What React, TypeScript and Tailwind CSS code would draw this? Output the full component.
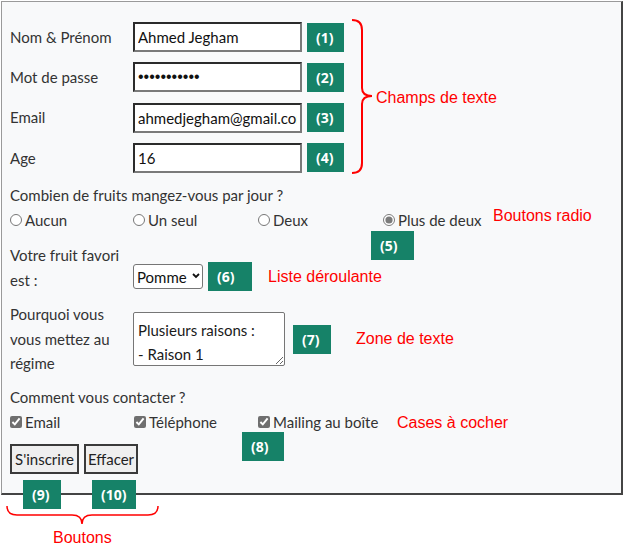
const labelFont = { fontFamily: "Lato, 'Open Sans', sans-serif" };

function Badge({ n, w }: { n: string; w: string }) {
  return (
    <div
      className={`${w} h-[29px] bg-[#168268] text-white text-[14px] font-bold flex items-center pl-[9px] font-['Open_Sans',sans-serif]`}
    >
      ({n})
    </div>
  );
}

function Note({ children, className = "" }: { children: React.ReactNode; className?: string }) {
  return (
    <span className={`text-[16px] text-[#ff0000] font-['Liberation_Sans',Arial,sans-serif] whitespace-nowrap ${className}`}>
      {children}
    </span>
  );
}

const inputCls =
  "w-[169px] h-[30px] border-2 border-[#7a7a7a] border-t-[#2b2b2b] border-l-[#2b2b2b] bg-white px-[3px] text-[15px] text-[#111] outline-none";

export default function App() {
  return (
    <div className="relative w-[624px] h-[546px] bg-white pt-px pl-px text-[15px] text-[#333]" style={labelFont}>
      {/* Form panel */}
      <div className="w-[622px] h-[494px] bg-[#f8f9fa] border-t border-l border-[#9a9a9a] border-r-2 border-b-2 border-r-[#444] border-b-[#444] pl-[8px] pt-[20px]">
        <div className="flex flex-col gap-[10.3px]">
          {[
            { label: "Nom & Prénom", type: "text", value: "Ahmed Jegham", n: "1" },
            { label: "Mot de passe", type: "password", value: "ahmedjegham", n: "2" },
            { label: "Email", type: "text", value: "ahmedjegham@gmail.com", n: "3" },
            { label: "Age", type: "text", value: "16", n: "4" },
          ].map((r) => (
            <div key={r.n} className="flex items-center h-[30px]">
              <label className="w-[123px]">{r.label}</label>
              <input
                className={inputCls}
                type={r.type}
                defaultValue={r.value}
                style={
                  r.type === "password"
                    ? { fontFamily: "'Liberation Sans', Arial, sans-serif", fontSize: "16px" }
                    : labelFont
                }
              />
              <div className="ml-[5px]">
                <Badge n={r.n} w="w-[37px]" />
              </div>
            </div>
          ))}
        </div>

        <div className="mt-[10px] leading-[25px]">Combien de fruits mangez-vous par jour ?</div>
        <div className="grid grid-cols-[123px_125px_125px_110px_auto] items-center leading-[25px]">
          {["Aucun", "Un seul", "Deux", "Plus de deux"].map((o) => (
            <label key={o} className="flex items-center gap-[3px]">
              <input
                type="radio"
                name="fruits"
                defaultChecked={o === "Plus de deux"}
                className="w-[12px] h-[12px] accent-[#7b7b7b]"
              />
              {o}
            </label>
          ))}
          <Note className="-mt-[10px]">Boutons radio</Note>
        </div>

        <div className="flex items-end mt-[10px]">
          <div className="w-[123px] leading-[25px]">
            Votre fruit favori
            <br />
            est :
          </div>
          <div className="flex items-center h-[29px] mb-[1.5px]">
            <div className="relative">
              <select
                className="appearance-none w-[70px] h-[25px] border border-[#767676] rounded-[3px] bg-white pl-[3px] text-[15px] text-[#111]"
                style={labelFont}
                defaultValue="Pomme"
              >
                <option>Pomme</option>
                <option>Banane</option>
              </select>
              <svg className="absolute right-[3px] top-[9px] w-[8px] h-[6px] pointer-events-none" viewBox="0 0 8 6">
                <path d="M1 1l3 3 3-3" fill="none" stroke="#111" strokeWidth="1.8" />
              </svg>
            </div>
            <div className="ml-[5px]">
              <Badge n="6" w="w-[44px]" />
            </div>
            <Note className="ml-[16px]">Liste déroulante</Note>
          </div>
        </div>

        <div className="flex items-center mt-[9.5px]">
          <div className="w-[123px] leading-[24.5px]">
            Pourquoi vous
            <br />
            vous mettez au
            <br />
            régime
          </div>
          <textarea
            className="w-[152px] h-[54px] border border-[#767676] rounded-[2px] bg-white pl-[4px] pt-[5px] leading-[24px] text-[15px] text-[#1a1a1a] overflow-hidden"
            style={labelFont}
            defaultValue={"Plusieurs raisons :\n- Raison 1"}
          />
          <div className="ml-[8px]">
            <Badge n="7" w="w-[38px]" />
          </div>
          <Note className="ml-[25px]">Zone de texte</Note>
        </div>

        <div className="mt-[9px] leading-[25px]">Comment vous contacter ?</div>
        <div className="grid grid-cols-[124px_124px_139px_auto] items-center leading-[25px]">
          {["Email", "Téléphone", "Mailing au boîte"].map((o) => (
            <label key={o} className="flex items-center gap-[3px]">
              <input type="checkbox" defaultChecked className="w-[12px] h-[12px] accent-[#6f6f6f]" />
              {o}
            </label>
          ))}
          <Note>Cases à cocher</Note>
        </div>

        <div className="flex gap-[5px] mt-[9px]">
          <button className="h-[30px] w-[69px] border-2 border-[#3a3a3a] bg-[#efefef] text-[15px] text-[#222]">
            S'inscrire
          </button>
          <button className="h-[30px] w-[54px] border-2 border-[#3a3a3a] bg-[#efefef] text-[15px] text-[#222]">
            Effacer
          </button>
        </div>
      </div>

      {/* Annotations laid over the form */}
      <svg className="absolute left-[350px] top-[18px] w-[26px] h-[158px]" viewBox="0 0 26 158" fill="none">
        <path d="M2 2 Q12 2 12 12 V70 Q12 78 22 78 Q12 78 12 86 V145 Q12 155 2 155" stroke="#ff0000" strokeWidth="2" />
      </svg>
      <Note className="absolute left-[376px] top-[86px]">Champs de texte</Note>

      <div className="absolute left-[371px] top-[231px]">
        <Badge n="5" w="w-[43px]" />
      </div>
      <div className="absolute left-[242px] top-[432px]">
        <Badge n="8" w="w-[42px]" />
      </div>
      <div className="absolute left-[23px] top-[480px]">
        <Badge n="9" w="w-[38px]" />
      </div>
      <div className="absolute left-[92px] top-[480px]">
        <Badge n="10" w="w-[44px]" />
      </div>

      <svg className="absolute left-[5px] top-[503px] w-[156px] h-[24px]" viewBox="0 0 156 24" fill="none">
        <path d="M2 3 Q2 12 12 12 H67 Q77 12 77 21 Q77 12 87 12 H143 Q153 12 153 3" stroke="#ff0000" strokeWidth="1.5" />
      </svg>
      <Note className="absolute left-[53px] top-[530px] leading-[16px]">Boutons</Note>
    </div>
  );
}
